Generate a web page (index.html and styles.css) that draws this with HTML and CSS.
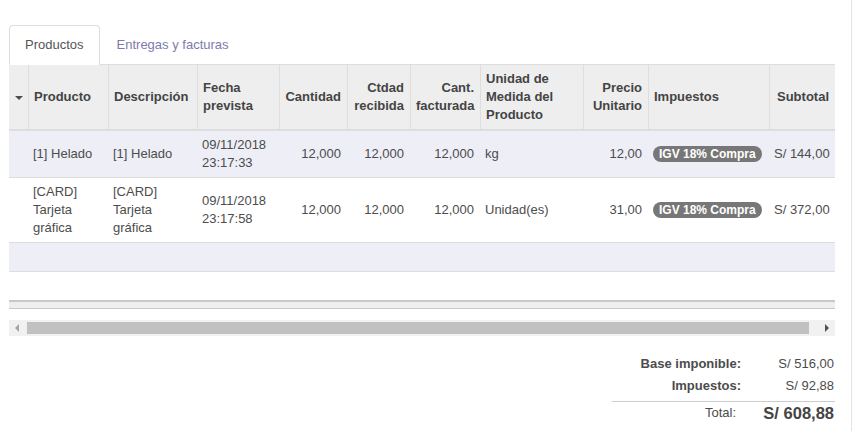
FILE: index.html
```html
<!DOCTYPE html>
<html lang="es">
<head>
<meta charset="utf-8">
<title>Pedido de compra</title>
<link rel="stylesheet" href="styles.css">
</head>
<body>
<div class="sheet">
  <div class="content">
    <ul class="tabs">
      <li class="tab active">Productos</li>
      <li class="tab">Entregas y facturas</li>
    </ul>
    <div class="table-wrap">
      <table class="lines">
        <colgroup>
          <col style="width:19px"><col style="width:80px"><col style="width:89px"><col style="width:82px"><col style="width:68px"><col style="width:63px"><col style="width:70px"><col style="width:103px"><col style="width:65px"><col style="width:121px"><col style="width:66px">
        </colgroup>
        <thead>
          <tr>
            <th class="sort"><span class="caret"></span></th>
            <th>Producto</th>
            <th>Descripción</th>
            <th>Fecha prevista</th>
            <th class="num">Cantidad</th>
            <th class="num">Ctdad recibida</th>
            <th class="num">Cant. facturada</th>
            <th>Unidad de Medida del Producto</th>
            <th class="num">Precio Unitario</th>
            <th>Impuestos</th>
            <th class="num">Subtotal</th>
          </tr>
        </thead>
        <tbody>
          <tr class="odd">
            <td></td>
            <td>[1] Helado</td>
            <td>[1] Helado</td>
            <td>09/11/2018 23:17:33</td>
            <td class="num">12,000</td>
            <td class="num">12,000</td>
            <td class="num">12,000</td>
            <td>kg</td>
            <td class="num">12,00</td>
            <td><span class="badge">IGV 18% Compra</span></td>
            <td class="num">S/ 144,00</td>
          </tr>
          <tr>
            <td></td>
            <td>[CARD] Tarjeta gráfica</td>
            <td>[CARD] Tarjeta gráfica</td>
            <td>09/11/2018 23:17:58</td>
            <td class="num">12,000</td>
            <td class="num">12,000</td>
            <td class="num">12,000</td>
            <td>Unidad(es)</td>
            <td class="num">31,00</td>
            <td><span class="badge">IGV 18% Compra</span></td>
            <td class="num">S/ 372,00</td>
          </tr>
          <tr class="odd empty">
            <td colspan="11">&nbsp;</td>
          </tr>
          <tr class="empty last">
            <td colspan="11">&nbsp;</td>
          </tr>
        </tbody>
        <tfoot>
          <tr><td colspan="11"></td></tr>
        </tfoot>
      </table>
    </div>
    <div class="hscroll">
      <span class="arrow left"></span>
      <div class="thumb"></div>
      <span class="arrow right"></span>
    </div>
    <div class="totals">
      <div class="t-label">Base imponible:</div>
      <div class="t-value">S/ 516,00</div>
      <div class="t-label">Impuestos:</div>
      <div class="t-value">S/ 92,88</div>
      <div class="t-total-label">Total:</div>
      <div class="t-total-value">S/ 608,88</div>
    </div>
  </div>
</div>
</body>
</html>
```

FILE: styles.css
```css
* { box-sizing: border-box; }
html, body { margin: 0; padding: 0; background: #fff; }
body {
  font-family: "Liberation Sans", Arial, sans-serif;
  font-size: 13px;
  line-height: 18px;
  color: #4c4c4c;
}
.sheet {
  width: 852px;
  min-height: 431px;
  border-right: 1px solid #e3e3e3;
}
.content {
  width: 835px;
  padding: 25px 0 0 9px;
}
.tabs {
  list-style: none;
  margin: 0;
  padding: 0;
  display: flex;
  border-bottom: 1px solid #ddd;
}
.tab {
  padding: 10px 15px;
  border: 1px solid transparent;
  border-radius: 4px 4px 0 0;
  margin-bottom: -1px;
  margin-right: 1px;
  color: #7c7bad;
}
.tab.active {
  color: #555;
  background: #fff;
  border-color: #ddd #ddd transparent #ddd;
}
.table-wrap { width: 826px; overflow: hidden; }
.lines {
  width: 826px;
  table-layout: fixed;
  border-collapse: separate;
  border-spacing: 0;
}
.lines th {
  background: #eee;
  color: #444;
  font-weight: bold;
  text-align: left;
  vertical-align: middle;
  padding: 5px 6px 5px 5px;
  border-bottom: 2px solid #ddd;
  border-left: 1px solid #dedede;
}
.lines th.sort { border-left: none; padding: 5px 0 5px 6px; }
.caret {
  display: inline-block;
  width: 0;
  height: 0;
  border-left: 4px solid transparent;
  border-right: 4px solid transparent;
  border-top: 4px solid #4c4c4c;
  vertical-align: middle;
}
.lines td {
  padding: 5px 6px 5px 5px;
  vertical-align: middle;
  border-bottom: 1px solid #ddd;
}
.lines .num { text-align: right; }
.lines td.num { white-space: nowrap; }
.lines tr.odd td { background: #eeeef6; }
.lines tr.last td { border-bottom: none; }
.lines tfoot td {
  padding: 0;
  height: 9px;
  background: #eee;
  border-top: 2px solid #c8c8c8;
  border-bottom: 1px solid #c8c8c8;
}
.badge {
  display: inline-block;
  background: #777;
  color: #fff;
  font-size: 12px;
  font-weight: bold;
  line-height: 16px;
  padding: 0 6px;
  border-radius: 9px;
  white-space: nowrap;
}
.hscroll {
  margin-top: 11px;
  width: 826px;
  height: 16px;
  background: #f1f1f1;
  display: flex;
  align-items: center;
  padding: 0 4px;
}
.arrow { width: 0; height: 0; border-top: 4px solid transparent; border-bottom: 4px solid transparent; }
.arrow.left { border-right: 4px solid #a3a3a3; margin-left: 2px; }
.arrow.right { border-left: 4px solid #505050; margin-left: auto; margin-right: 2px; }
.thumb {
  margin-left: 8px;
  width: 782px;
  height: 12px;
  background: #c1c1c1;
}
.totals {
  margin: 17px 0 0 603px;
  width: 223px;
  display: grid;
  grid-template-columns: 1fr 90px;
  grid-auto-rows: 22px;
  align-items: center;
}
.t-label {
  text-align: right;
  font-weight: bold;
  padding-right: 4px;
  color: #4c4c4c;
}
.t-value { text-align: right; padding-right: 1px; }
.t-total-label, .t-total-value {
  margin-top: 8px;
  border-top: 1px solid #ccc;
  height: 22px;
  display: flex;
  align-items: center;
  justify-content: flex-end;
}
.t-total-label { padding-right: 9px; }
.t-total-value {
  font-size: 16.5px;
  font-weight: bold;
  padding-right: 1px;
  color: #444;
}
```
